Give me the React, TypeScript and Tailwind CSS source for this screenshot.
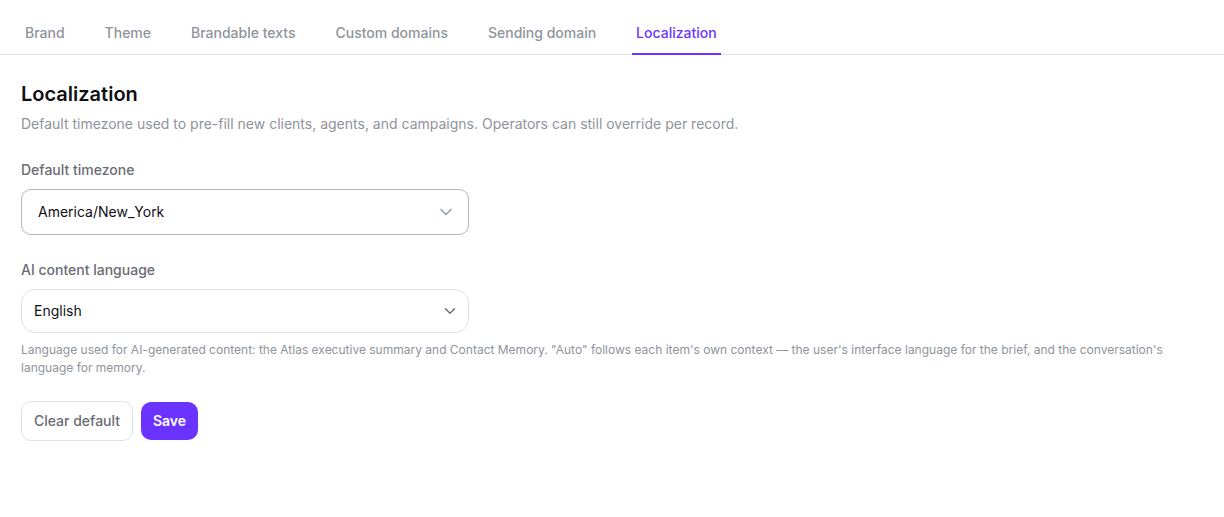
import React from "react";

const tabs = ["Brand", "Theme", "Brandable texts", "Custom domains", "Sending domain", "Localization"];

function Chevron({ className }: { className: string }) {
  return (
    <svg viewBox="0 0 24 24" fill="none" stroke="currentColor" strokeWidth="2" strokeLinecap="round" strokeLinejoin="round" className={className}>
      <path d="m6 9 6 6 6-6" />
    </svg>
  );
}

export default function App() {
  return (
    <div className="min-h-[517px] bg-white font-['Inter',sans-serif] text-[#0f0f14]">
      <div className="flex h-[55px] items-end gap-8 border-b border-[#dde1e8] px-[21px]">
        {tabs.map((t, i) => (
          <div
            key={t}
            className={
              i === 5
                ? "-mb-px border-b-2 border-[#6a33ff] px-1 pb-[10px] text-sm font-medium leading-5 text-[#6a33ff]"
                : "-mb-px border-b-2 border-transparent px-1 pb-[10px] text-sm font-medium leading-5 text-[#8f939b]"
            }
          >
            {t}
          </div>
        ))}
      </div>
      <div className="px-[21px] pt-[25px]">
        <h2 className="text-xl font-semibold leading-7">Localization</h2>
        <p className="mt-[6px] text-sm leading-5 text-[#8f939b]">
          Default timezone used to pre-fill new clients, agents, and campaigns. Operators can still override per record.
        </p>

        <label className="mt-[26px] block text-sm font-medium leading-5 text-[#6b6b73]">Default timezone</label>
        <div className="mt-[9px] flex h-[46px] w-[448px] items-center justify-between rounded-[10px] border border-[#aeb7c4] pl-4 pr-3 text-sm">
          <span>America/New_York</span>
          <Chevron className="h-5 w-5 text-[#94a3b8]" />
        </div>

        <label className="mt-[25px] block text-sm font-medium leading-5 text-[#6b6b73]">AI content language</label>
        <div className="mt-[9px] flex h-[44px] w-[448px] items-center justify-between rounded-[14px] border border-[#dde1e8] pl-3 pr-[9px] text-sm">
          <span>English</span>
          <Chevron className="h-[18px] w-[18px] text-[#6b7280]" />
        </div>
        <p className="mt-2 w-[1160px] text-xs leading-[18px] text-[#8f939b]">
          Language used for AI-generated content: the Atlas executive summary and Contact Memory. "Auto" follows each item's own context — the user's interface language for the brief, and the conversation's language for memory.
        </p>

        <div className="mt-6 flex items-center gap-2">
          <button className="h-10 w-[112px] rounded-[10px] border border-[#dde1e8] bg-white text-sm font-medium text-[#6b6b73]">Clear default</button>
          <button className="h-[38px] w-[57px] rounded-[10px] bg-[#6a33ff] text-sm font-semibold text-white">Save</button>
        </div>
      </div>
    </div>
  );
}
